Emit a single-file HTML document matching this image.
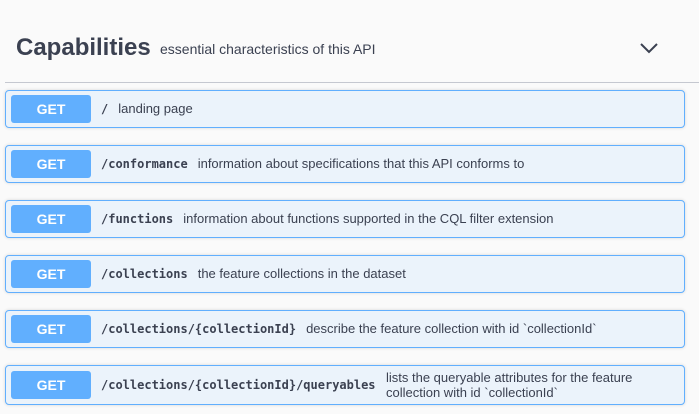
<!DOCTYPE html>
<html><head><style>
body{margin:0;background:#fafafa;width:699px;height:414px;overflow:hidden;font-family:"Liberation Sans",sans-serif;color:#3b4151}
.h{position:absolute;left:16px;top:34px;font-size:24px;font-weight:bold;}
.hs{position:absolute;left:160px;top:41px;font-size:14px;}
.line{position:absolute;left:5px;right:0;top:82px;border-top:1px solid #c5c8d0}
.op{position:absolute;left:5px;width:678px;height:36px;border:1px solid #61affe;border-radius:4px;background:#ebf3fb;box-shadow:0 0 3px rgba(0,0,0,.15)}
.get{position:absolute;left:5px;top:4px;width:80px;height:28px;background:#61affe;border-radius:3px;color:#fff;font-weight:bold;font-size:14px;text-align:center;line-height:28px}
.p{position:absolute;left:95px;top:0;line-height:36px;font-family:"DejaVu Sans Mono","Liberation Mono",monospace;font-weight:bold;font-size:12px;color:#3b4151}
.d{font-family:"Liberation Sans",sans-serif;font-weight:normal;font-size:13px;margin-left:10px}
</style></head><body>
<div class="h">Capabilities</div>
<div class="hs">essential characteristics of this API</div>
<svg style="position:absolute;left:640px;top:42px" width="18" height="12" viewBox="0 0 18 12"><path d="M1 2 L9 10 L17 2" fill="none" stroke="#3b4151" stroke-width="2"/></svg>
<div class="line"></div>
<div class="op" style="top:90px"><div class="get">GET</div><div class="p">/<span class="d">landing page</span></div></div>
<div class="op" style="top:145px"><div class="get">GET</div><div class="p">/conformance<span class="d">information about specifications that this API conforms to</span></div></div>
<div class="op" style="top:200px"><div class="get">GET</div><div class="p">/functions<span class="d">information about functions supported in the CQL filter extension</span></div></div>
<div class="op" style="top:255px"><div class="get">GET</div><div class="p">/collections<span class="d">the feature collections in the dataset</span></div></div>
<div class="op" style="top:310px"><div class="get">GET</div><div class="p">/collections/{collectionId}<span class="d">describe the feature collection with id `collectionId`</span></div></div>
<div class="op" style="top:365px;height:38px"><div class="get" style="top:5px">GET</div><div class="p" style="line-height:38px">/collections/{collectionId}/queryables</div><div style="position:absolute;left:380px;top:4px;font-size:13px;line-height:15px">lists the queryable attributes for the feature<br>collection with id `collectionId`</div></div>
</body></html>
